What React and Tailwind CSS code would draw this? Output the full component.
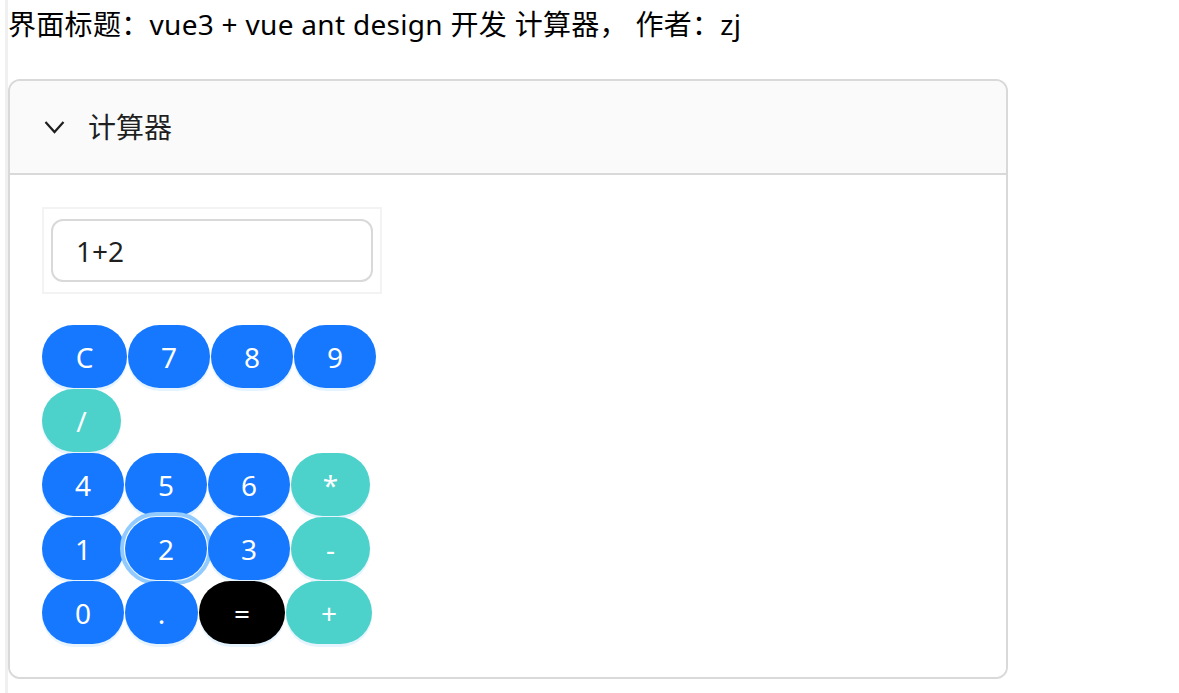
const BLUE = 'bg-[#1677ff]'
const TEAL = 'bg-[#4cd2ca]'
const BLACK = 'bg-black'

const rows = [
  [
    { t: 'C', w: 'w-[85px]', c: BLUE },
    { t: '7', w: 'w-[82px]', c: BLUE },
    { t: '8', w: 'w-[82px]', c: BLUE },
    { t: '9', w: 'w-[82px]', c: BLUE },
  ],
  [{ t: '/', w: 'w-[79px]', c: TEAL }],
  [
    { t: '4', w: 'w-[82px]', c: BLUE },
    { t: '5', w: 'w-[82px]', c: BLUE },
    { t: '6', w: 'w-[82px]', c: BLUE },
    { t: '*', w: 'w-[79px]', c: TEAL },
  ],
  [
    { t: '1', w: 'w-[82px]', c: BLUE },
    { t: '2', w: 'w-[82px]', c: BLUE, focus: true },
    { t: '3', w: 'w-[82px]', c: BLUE },
    { t: '-', w: 'w-[79px]', c: TEAL },
  ],
  [
    { t: '0', w: 'w-[82px]', c: BLUE },
    { t: '.', w: 'w-[73px]', c: BLUE },
    { t: '=', w: 'w-[86px]', c: BLACK },
    { t: '+', w: 'w-[86px]', c: TEAL },
  ],
]

const Key = ({ t, w, c, focus }) => (
  <button
    className={`${w} ${c} h-[63px] rounded-full text-[28px] leading-none text-white shadow-[0_3px_0_rgba(5,145,255,0.1)] ${
      focus ? 'outline-4 outline-offset-1 outline-[#91caff]' : ''
    }`}
  >
    {t}
  </button>
)

export default function App() {
  return (
    <div
      className="h-screen bg-white pl-[5px] text-[rgba(0,0,0,0.88)]"
      style={{ fontFamily: '"Noto Sans", "Noto Sans CJK SC", sans-serif' }}
    >
      <div className="h-full border-l-[3px] border-[#f0f0f0]">
        <div className="pt-[4px] text-[28px] leading-[40px] tracking-[0.3px] text-black">
          界面标题：vue3 + vue ant design 开发 计算器， 作者：zj
        </div>

        <div className="mt-[35px] w-[1000px] overflow-hidden rounded-[12px] border-2 border-[#d9d9d9]">
          <div className="flex h-[94px] items-center border-b-2 border-[#d9d9d9] bg-[#fafafa] pl-[32px]">
            <span className="flex h-[24px] w-[24px] items-center justify-center">
              <svg width="21" height="14" viewBox="0 0 21 14" fill="none">
                <path d="M1.5 2 L10.5 12 L19.5 2" stroke="#1f1f1f" strokeWidth="2.2" />
              </svg>
            </span>
            <span className="ml-[22px] text-[28px] leading-none">计算器</span>
          </div>

          <div className="h-[502px] bg-white px-[32px] pt-[32px]">
            <div className="w-[340px] border-2 border-[#f3f3f3] px-[7px] py-[10px]">
              <div className="flex h-[63px] items-center rounded-[12px] border-2 border-[#d9d9d9] pl-[23px] text-[28px]">
                1+2
              </div>
            </div>

            <div className="mt-[31px] flex flex-col gap-px">
              {rows.map((row, i) => (
                <div key={i} className="flex gap-px">
                  {row.map((k) => (
                    <Key key={k.t} {...k} />
                  ))}
                </div>
              ))}
            </div>
          </div>
        </div>
      </div>
    </div>
  )
}
